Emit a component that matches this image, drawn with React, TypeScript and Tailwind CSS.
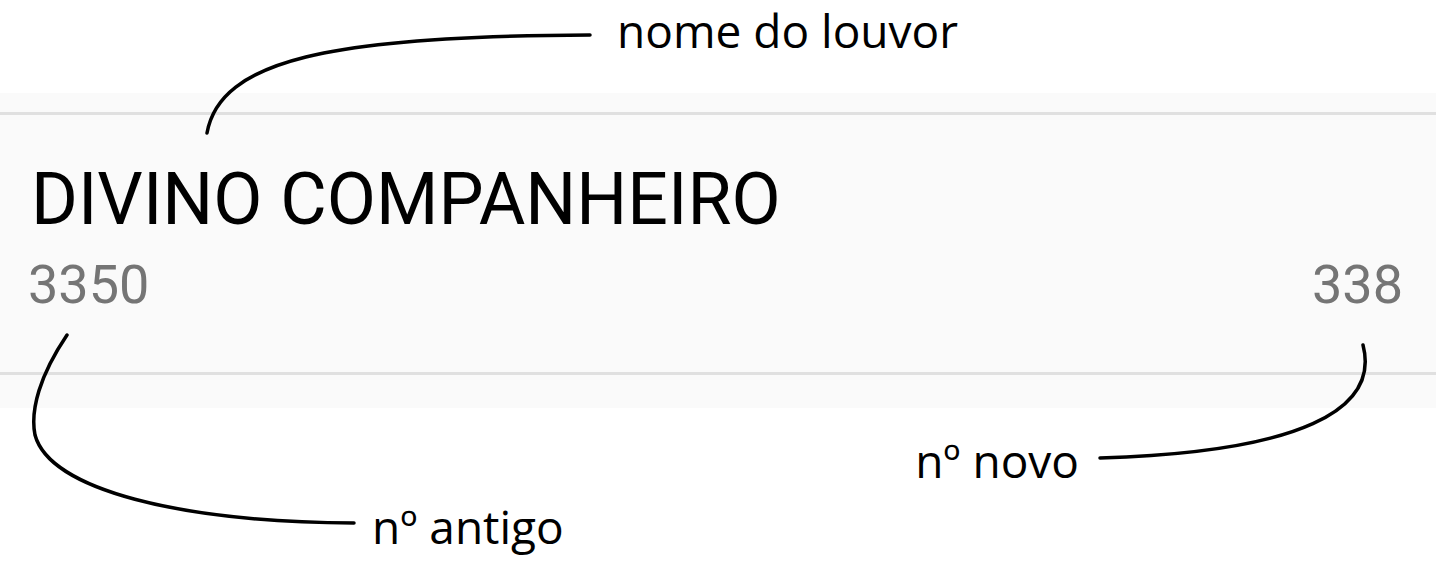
import React from "react";

const annot = { fontFamily: '"Open Sans", "Noto Sans", sans-serif' };
const roboto = { fontFamily: 'Roboto, "Liberation Sans", sans-serif' };

export default function App() {
  return (
    <div className="relative w-[1436px] h-[577px] overflow-hidden bg-white">
      <div className="flex flex-col">
        <div className="h-[93px] pl-[617px] pt-[2px]">
          <span style={annot} className="text-[46px] leading-[56px] text-black">
            nome do louvor
          </span>
        </div>
        <div className="bg-[#fafafa] pt-[19px] pb-[33px]">
          <div className="border-y-[3px] border-[#e0e0e0] pl-[28px] pr-[33px] pt-[49px] h-[263px]" style={roboto}>
            <div className="ml-[3px] text-[71.5px] leading-[72px] text-black">DIVINO COMPANHEIRO</div>
            <div className="mt-[22px] flex justify-between text-[54px] leading-[53px] text-[#757575]">
              <span>3350</span>
              <span>338</span>
            </div>
          </div>
        </div>
        <div className="relative h-[169px]" style={annot}>
          <div className="flex justify-end pr-[357px] pt-[24px]">
            <span className="text-[46px] leading-[56px] text-black">nº novo</span>
          </div>
          <div className="pl-[372px] pt-[10px]">
            <span className="text-[46px] leading-[56px] text-black">nº antigo</span>
          </div>
        </div>
      </div>
      <svg
        className="pointer-events-none absolute inset-0"
        width="1436"
        height="577"
        viewBox="0 0 1436 577"
        fill="none"
        stroke="black"
        strokeWidth="3.5"
        strokeLinecap="round"
      >
        <path d="M207,133 C220,60 330,36 590,35" />
        <path d="M67,335 C40,375 30,410 35,435 C50,490 180,522 354,523" />
        <path d="M1363,345 C1380,410 1300,452 1100,458" />
      </svg>
    </div>
  );
}
